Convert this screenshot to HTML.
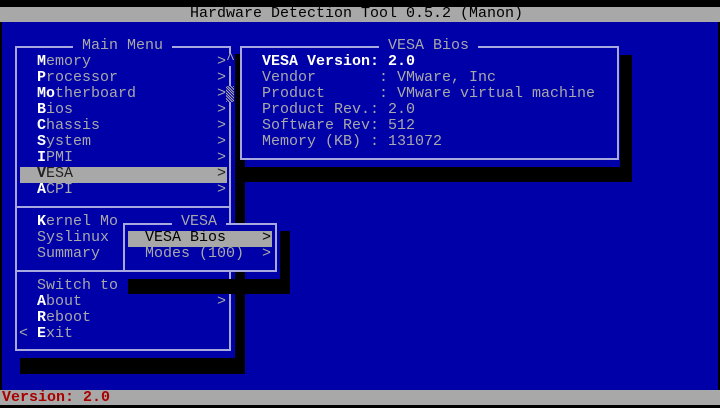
<!DOCTYPE html>
<html><head><meta charset="utf-8"><style>
*{margin:0;padding:0}
body{width:720px;height:408px;background:#000;position:relative;overflow:hidden;font-family:"Liberation Mono",monospace;font-size:15px;line-height:16px}
.a{position:absolute;white-space:pre}
.g{color:#a8a8a8}.w{color:#fff;font-weight:bold}
.bl{position:absolute;background:#a8a8e0}
.k{position:absolute;background:#000}
.r{position:absolute;left:217px;color:#a8a8a8}
</style></head><body>
<div class="a" style="left:0;top:7px;width:720px;height:15px;background:#a8a8a8"></div>
<div class="a" style="left:190px;top:6px;color:#000">Hardware Detection Tool 0.5.2 (Manon)</div>
<div class="a" style="left:2px;top:22px;width:716px;height:368px;background:#0000a8"></div>
<div class="a" style="left:0;top:390px;width:720px;height:15px;background:#a8a8a8"></div>
<div class="a" style="left:2px;top:390px;color:#a80000;font-weight:bold">Version: 2.0</div>

<!-- main menu shadow -->
<div class="k" style="left:235px;top:54px;width:10px;height:320px"></div>
<div class="k" style="left:20px;top:358px;width:225px;height:16px"></div>
<!-- main menu box -->
<div class="bl" style="left:15px;top:46px;width:216px;height:2px"></div>
<div class="bl" style="left:15px;top:349px;width:216px;height:2px"></div>
<div class="bl" style="left:15px;top:46px;width:2px;height:305px"></div>
<div class="bl" style="left:229px;top:46px;width:2px;height:305px"></div>
<div class="bl" style="left:15px;top:206px;width:216px;height:2px"></div>
<div class="bl" style="left:15px;top:270px;width:216px;height:2px"></div>
<div class="a g" style="left:73px;top:38px;background:#0000a8"> Main Menu </div>
<div class="a" style="left:226px;top:54px;width:9px;height:12px;background:#0000a8"></div>
<div class="a" style="left:226px;top:52px;color:#a8a8a8">^</div>
<div class="a" style="left:226px;top:86px;width:8px;height:16px;background:repeating-linear-gradient(45deg,#a8a8a8 0 1px,#0000a8 1px 2px)"></div>
<div class="a" style="left:20px;top:167px;width:207px;height:16px;background:#a8a8a8"></div>

<div class="a g" style="left:37px;top:54px"><b class="w">M</b>emory</div>
<div class="a g" style="left:37px;top:70px"><b class="w">P</b>rocessor</div>
<div class="a g" style="left:37px;top:86px"><b class="w">M</b><b class="w">o</b>therboard</div>
<div class="a g" style="left:37px;top:102px"><b class="w">B</b>ios</div>
<div class="a g" style="left:37px;top:118px"><b class="w">C</b>hassis</div>
<div class="a g" style="left:37px;top:134px"><b class="w">S</b>ystem</div>
<div class="a g" style="left:37px;top:150px"><b class="w">I</b>PMI</div>
<div class="a" style="left:37px;top:166px;color:#222"><b>V</b>ESA</div>
<div class="a g" style="left:37px;top:182px"><b class="w">A</b>CPI</div>
<div class="r" style="top:54px">&gt;</div>
<div class="r" style="top:70px">&gt;</div>
<div class="r" style="top:86px">&gt;</div>
<div class="r" style="top:102px">&gt;</div>
<div class="r" style="top:118px">&gt;</div>
<div class="r" style="top:134px">&gt;</div>
<div class="r" style="top:150px">&gt;</div>
<div class="r" style="top:166px;color:#222">&gt;</div>
<div class="r" style="top:182px">&gt;</div>
<div class="r" style="top:294px">&gt;</div>
<div class="a g" style="left:37px;top:214px"><b class="w">K</b>ernel Mo</div>
<div class="a g" style="left:37px;top:230px">Syslinux</div>
<div class="a g" style="left:37px;top:246px">Summary</div>
<div class="a g" style="left:37px;top:278px">Switch to</div>
<div class="a g" style="left:37px;top:294px"><b class="w">A</b>bout</div>
<div class="a g" style="left:37px;top:310px"><b class="w">R</b>eboot</div>
<div class="a g" style="left:19px;top:326px">&lt; <b class="w">E</b>xit</div>

<!-- VESA Bios box shadow -->
<div class="k" style="left:620px;top:55px;width:12px;height:127px"></div>
<div class="k" style="left:237px;top:167px;width:395px;height:15px"></div>
<div class="a" style="left:240px;top:47px;width:380px;height:113px;background:#0000a8"></div>
<div class="bl" style="left:240px;top:46px;width:379px;height:2px"></div>
<div class="bl" style="left:240px;top:158px;width:379px;height:2px"></div>
<div class="bl" style="left:240px;top:46px;width:2px;height:114px"></div>
<div class="bl" style="left:617px;top:46px;width:2px;height:114px"></div>
<div class="a g" style="left:379px;top:38px;background:#0000a8"> VESA Bios </div>
<div class="a w" style="left:262px;top:54px">VESA Version: 2.0</div>
<div class="a g" style="left:262px;top:70px">Vendor       : VMware, Inc</div>
<div class="a g" style="left:262px;top:86px">Product      : VMware virtual machine</div>
<div class="a g" style="left:262px;top:102px">Product Rev.: 2.0</div>
<div class="a g" style="left:262px;top:118px">Software Rev: 512</div>
<div class="a g" style="left:262px;top:134px">Memory (KB) : 131072</div>

<!-- VESA submenu -->
<div class="k" style="left:280px;top:231px;width:10px;height:63px"></div>
<div class="k" style="left:128px;top:279px;width:162px;height:15px"></div>
<div class="a" style="left:123px;top:223px;width:154px;height:49px;background:#0000a8"></div>
<div class="bl" style="left:123px;top:223px;width:154px;height:2px"></div>
<div class="bl" style="left:123px;top:270px;width:154px;height:2px"></div>
<div class="bl" style="left:123px;top:223px;width:2px;height:49px"></div>
<div class="bl" style="left:275px;top:223px;width:2px;height:49px"></div>
<div class="a g" style="left:172px;top:214px;background:#0000a8"> VESA </div>
<div class="a" style="left:128px;top:231px;width:144px;height:16px;background:#a8a8a8"></div>
<div class="a" style="left:145px;top:230px;color:#000">VESA Bios</div>
<div class="a" style="left:262px;top:230px;color:#000">&gt;</div>
<div class="a g" style="left:145px;top:246px">Modes (100)</div>
<div class="a g" style="left:262px;top:246px">&gt;</div>
</body></html>
